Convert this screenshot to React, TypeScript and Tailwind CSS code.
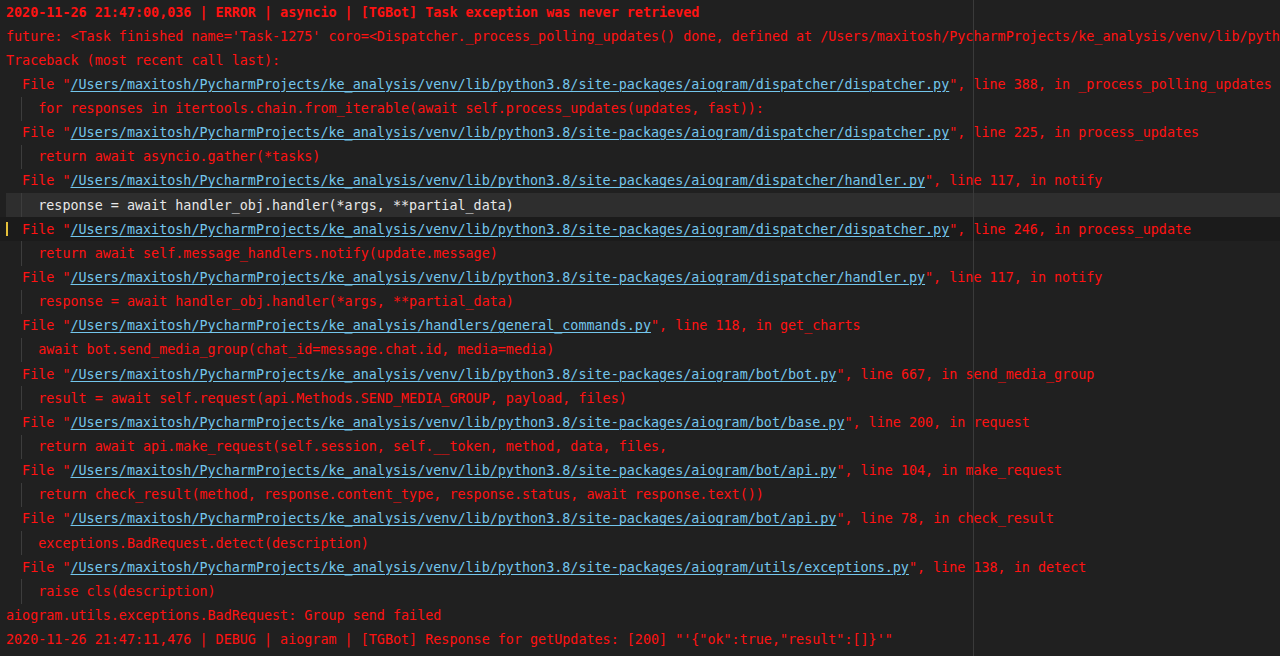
import React from 'react';

type Line =
  | { kind: 'plain'; text: string; bold?: boolean }
  | { kind: 'file'; path: string; rest: string; mark?: boolean }
  | { kind: 'code'; text: string; current?: boolean };

const VENV = '/Users/maxitosh/PycharmProjects/ke_analysis/venv/lib/python3.8/site-packages/aiogram';

const lines: Line[] = [
  { kind: 'plain', bold: true, text: '2020-11-26 21:47:00,036 | ERROR | asyncio | [TGBot] Task exception was never retrieved' },
  {
    kind: 'plain',
    text: "future: <Task finished name='Task-1275' coro=<Dispatcher._process_polling_updates() done, defined at /Users/maxitosh/PycharmProjects/ke_analysis/venv/lib/python3.8/site-packages/aiogram/dispatcher/dispatcher.py:327> exception=BadRequest('Group send failed')>",
  },
  { kind: 'plain', text: 'Traceback (most recent call last):' },
  { kind: 'file', path: `${VENV}/dispatcher/dispatcher.py`, rest: ', line 388, in _process_polling_updates' },
  { kind: 'code', text: 'for responses in itertools.chain.from_iterable(await self.process_updates(updates, fast)):' },
  { kind: 'file', path: `${VENV}/dispatcher/dispatcher.py`, rest: ', line 225, in process_updates' },
  { kind: 'code', text: 'return await asyncio.gather(*tasks)' },
  { kind: 'file', path: `${VENV}/dispatcher/handler.py`, rest: ', line 117, in notify' },
  { kind: 'code', current: true, text: 'response = await handler_obj.handler(*args, **partial_data)' },
  { kind: 'file', mark: true, path: `${VENV}/dispatcher/dispatcher.py`, rest: ', line 246, in process_update' },
  { kind: 'code', text: 'return await self.message_handlers.notify(update.message)' },
  { kind: 'file', path: `${VENV}/dispatcher/handler.py`, rest: ', line 117, in notify' },
  { kind: 'code', text: 'response = await handler_obj.handler(*args, **partial_data)' },
  { kind: 'file', path: '/Users/maxitosh/PycharmProjects/ke_analysis/handlers/general_commands.py', rest: ', line 118, in get_charts' },
  { kind: 'code', text: 'await bot.send_media_group(chat_id=message.chat.id, media=media)' },
  { kind: 'file', path: `${VENV}/bot/bot.py`, rest: ', line 667, in send_media_group' },
  { kind: 'code', text: 'result = await self.request(api.Methods.SEND_MEDIA_GROUP, payload, files)' },
  { kind: 'file', path: `${VENV}/bot/base.py`, rest: ', line 200, in request' },
  { kind: 'code', text: 'return await api.make_request(self.session, self.__token, method, data, files,' },
  { kind: 'file', path: `${VENV}/bot/api.py`, rest: ', line 104, in make_request' },
  { kind: 'code', text: 'return check_result(method, response.content_type, response.status, await response.text())' },
  { kind: 'file', path: `${VENV}/bot/api.py`, rest: ', line 78, in check_result' },
  { kind: 'code', text: 'exceptions.BadRequest.detect(description)' },
  { kind: 'file', path: `${VENV}/utils/exceptions.py`, rest: ', line 138, in detect' },
  { kind: 'code', text: 'raise cls(description)' },
  { kind: 'plain', text: 'aiogram.utils.exceptions.BadRequest: Group send failed' },
  { kind: 'plain', text: `2020-11-26 21:47:11,476 | DEBUG | aiogram | [TGBot] Response for getUpdates: [200] "'{"ok":true,"result":[]}'"` },
];

const Row: React.FC<{ line: Line }> = ({ line }) => {
  if (line.kind === 'plain') {
    return (
      <div className="h-[24.15px] pl-[6px] pt-[1px] flex items-center">
        <span className={`whitespace-pre text-[#ff1212] ${line.bold ? 'font-bold' : ''}`}>{line.text}</span>
      </div>
    );
  }

  if (line.kind === 'file') {
    return (
      <div className={`relative h-[24.15px] pl-[6px] pt-[1px] flex items-center ${line.mark ? 'bg-[#1b1b1b]' : ''}`}>
        {line.mark && <div className="absolute left-[6px] top-[5px] w-[2px] h-[14px] bg-[#e5c03a]" />}
        <span className="whitespace-pre text-[#ff1212]">
          {'  File "'}
          <span className="text-[#74c6ec] underline underline-offset-2">{line.path}</span>
          {'"' + line.rest}
        </span>
      </div>
    );
  }

  return (
    <div className="h-[24.15px] pl-[6px] flex">
      <div className={`relative flex-1 pt-[1px] flex items-center ${line.current ? 'bg-[#2e2e2e]' : ''}`}>
        <div className="absolute left-[15px] top-0 bottom-0 w-px bg-[#3d3d3d]" />
        <span className={`whitespace-pre ${line.current ? 'text-[#e8e8e8]' : 'text-[#ff1212]'}`}>
          {'    ' + line.text}
        </span>
      </div>
    </div>
  );
};

export default function App() {
  return (
    <div
      className="relative w-full h-[656px] overflow-hidden bg-[#202020] text-[13.4px] leading-[24.15px]"
      style={{ fontFamily: '"DejaVu Sans Mono", "Liberation Mono", monospace' }}
    >
      {/* right margin guide */}
      <div className="absolute left-[973px] top-0 bottom-0 w-px bg-[#3a3a3a] z-10" />
      <div className="flex flex-col">
        {lines.map((line, i) => (
          <Row key={i} line={line} />
        ))}
      </div>
    </div>
  );
}
